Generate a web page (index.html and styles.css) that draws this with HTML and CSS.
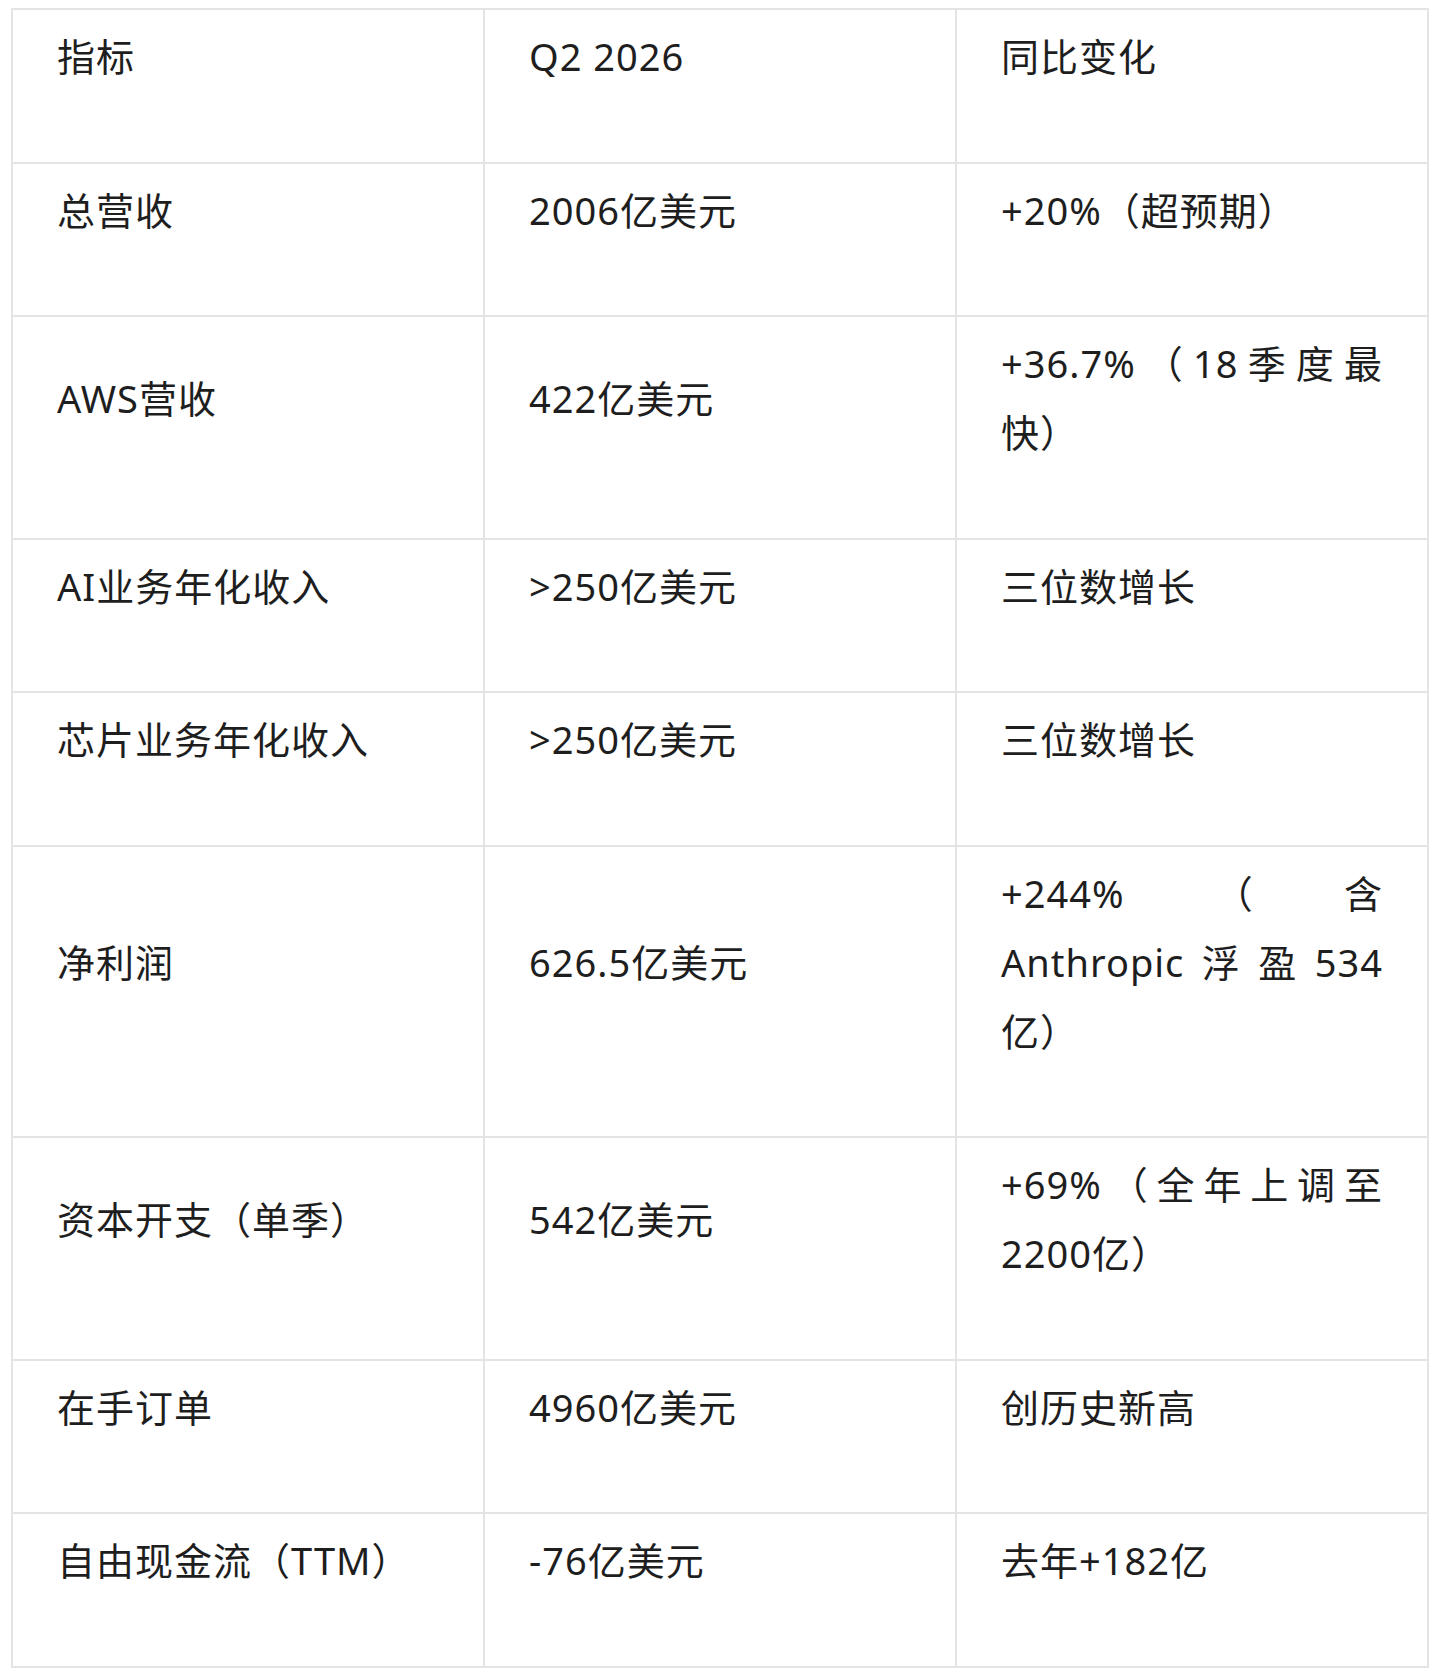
FILE: index.html
```html
<!DOCTYPE html>
<html lang="zh-CN">
<head>
<meta charset="utf-8">
<title>Q2 2026 指标</title>
<link rel="stylesheet" href="styles.css">
</head>
<body>
<table class="data">
  <tbody>
    <tr>
      <td><p>指标</p></td>
      <td><p>Q2 2026</p></td>
      <td><p>同比变化</p></td>
    </tr>
    <tr>
      <td><p>总营收</p></td>
      <td><p>2006亿美元</p></td>
      <td><p>+20%（超预期）</p></td>
    </tr>
    <tr>
      <td><p>AWS营收</p></td>
      <td><p>422亿美元</p></td>
      <td><p>+36.7%（18季度最快）</p></td>
    </tr>
    <tr>
      <td><p>AI业务年化收入</p></td>
      <td><p>&gt;250亿美元</p></td>
      <td><p>三位数增长</p></td>
    </tr>
    <tr>
      <td><p>芯片业务年化收入</p></td>
      <td><p>&gt;250亿美元</p></td>
      <td><p>三位数增长</p></td>
    </tr>
    <tr>
      <td><p>净利润</p></td>
      <td><p>626.5亿美元</p></td>
      <td><p>+244%（含Anthropic浮盈534亿）</p></td>
    </tr>
    <tr>
      <td><p>资本开支（单季）</p></td>
      <td><p>542亿美元</p></td>
      <td><p>+69%（全年上调至2200亿）</p></td>
    </tr>
    <tr>
      <td><p>在手订单</p></td>
      <td><p>4960亿美元</p></td>
      <td><p>创历史新高</p></td>
    </tr>
    <tr>
      <td><p>自由现金流（TTM）</p></td>
      <td><p>-76亿美元</p></td>
      <td><p>去年+182亿</p></td>
    </tr>
  </tbody>
</table>
</body>
</html>
```

FILE: styles.css
```css
html, body {
  background: #ffffff;
}

body {
  margin: 8px 11px;
  font-family: "Noto Sans", "Noto Sans CJK SC", sans-serif;
  color: #1e1e1e;
}

.data {
  width: 100%;
  border-collapse: collapse;
  table-layout: fixed;
}

.data td {
  border: 2px solid #e4e4e4;
  padding: 12px 44px 0;
  vertical-align: middle;
  font-size: 38px;
  letter-spacing: 1px;
  text-align: justify;
}

.data p {
  margin: 0 0 70.5px;
  line-height: 69px;
}
```
